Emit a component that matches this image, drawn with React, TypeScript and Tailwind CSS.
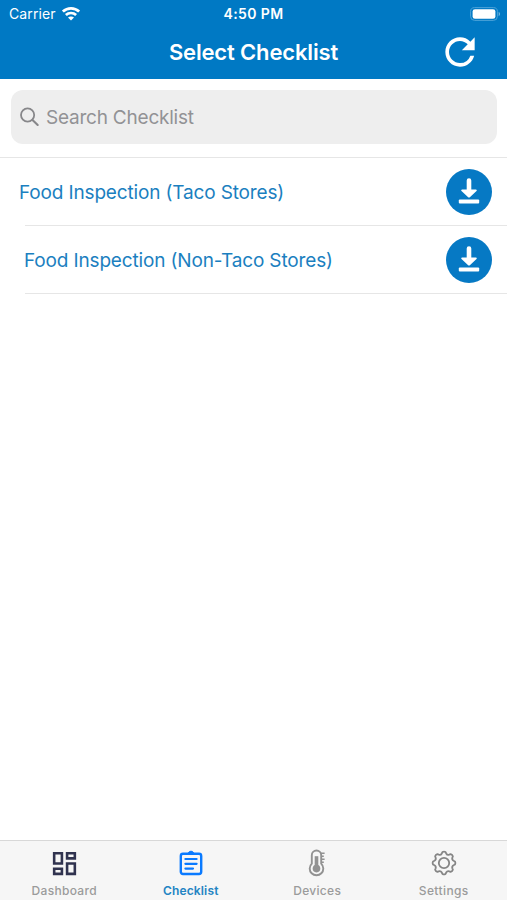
import React from 'react';
import { MdOutlineDashboard, MdRefresh } from 'react-icons/md';

interface ChecklistRowProps {
  title: string;
  textClassName: string;
}

interface TabItemProps {
  label: string;
  labelClassName: string;
  children: React.ReactNode;
}

// Outline of an eight-toothed gear centred on the origin
const gearPath = (() => {
  const point = (radius: number, degrees: number) => {
    const a = (degrees * Math.PI) / 180;
    return `${(radius * Math.sin(a)).toFixed(2)} ${(-radius * Math.cos(a)).toFixed(2)}`;
  };
  let d = `M${point(11.1, -8)}`;
  for (let i = 0; i < 8; i++) {
    const a = i * 45;
    d += `Q${point(11.8, a)} ${point(11.1, a + 8)}`;
    d += `L${point(9.8, a + 13)}Q${point(8.4, a + 22.5)} ${point(9.8, a + 32)}L${point(11.1, a + 37)}`;
  }
  return `${d}Z`;
})();

const WifiIcon = () => (
  <svg className="w-[18px] h-[14px]" viewBox="0 0 18 14" fill="none" stroke="white" strokeWidth="2.7">
    <path d="M.9 4.6C5.4.3 12.6.3 17.1 4.6" />
    <path d="M3.9 8c2.8-2.7 7.4-2.7 10.2 0" />
    <path d="M9 13.5 6 10.5c1.6-1.5 4.4-1.5 6 0z" fill="white" stroke="none" />
  </svg>
);

const BatteryIcon = () => (
  <svg className="w-[31px] h-[14px]" viewBox="0 0 31 14" fill="none">
    <rect x=".6" y=".6" width="26.8" height="12.8" rx="4" stroke="#4ca3d8" />
    <rect x="2.6" y="2.2" width="22.8" height="9.6" rx="2.4" fill="white" />
    <path d="M28.7 4.8c1.8.7 1.8 3.7 0 4.4z" fill="#79b9e0" />
  </svg>
);

const SearchIcon = () => (
  <svg className="w-5 h-5" viewBox="0 0 20 20" fill="none" stroke="#87878a" strokeWidth="1.8" strokeLinecap="round">
    <circle cx="7.6" cy="8" r="6.6" />
    <path d="m12.5 12.9 5.2 5" strokeWidth="2.1" />
  </svg>
);

const DownloadIcon = () => (
  <svg className="w-6 h-7" viewBox="0 0 24 28">
    <path d="M9.7 2.6a2.3 2.3 0 0 1 4.6 0v8.9h4.5c1 0 1.3.8.7 1.4l-6.4 6.2q-1.1 1-2.2 0l-6.4-6.2c-.6-.6-.3-1.4.7-1.4h4.5z" fill="white" />
    <rect x="1.8" y="21.6" width="20.4" height="3.8" rx="1" fill="white" />
  </svg>
);

const ClipboardIcon = () => (
  <svg className="w-6 h-[26px]" viewBox="0 0 24 26" fill="none" stroke="#0a7aff" strokeWidth="2.4">
    <rect x="1.8" y="3.8" width="20.4" height="20.2" rx="2.2" />
    <path d="M7.8 3.8c1.6 0 1.4-2.6 4.2-2.6s2.6 2.6 4.2 2.6z" fill="#0a7aff" strokeWidth="1" />
    <path d="M6.4 9h11.2M6.4 13.8h11.2M6.4 18.6h7.6" strokeLinecap="round" strokeWidth="2.2" />
  </svg>
);

const ThermometerIcon = () => (
  <svg className="w-[18px] h-7" viewBox="0 0 18 28" fill="none" stroke="#929292" strokeWidth="1.9">
    <path d="M3.8 14.6V6.2a4.7 4.7 0 0 1 9.4 0v8.4a6.8 6.8 0 1 1-9.4 0z" />
    <circle cx="8.5" cy="19.6" r="3.8" fill="#929292" stroke="none" />
    <path d="M8.5 7.2v11.4" strokeWidth="3.6" />
    <path d="M12 4.2h4.6M13 7.2h2.8M13 10.2h3.6M13 13.2h2.8" strokeWidth="1.6" />
  </svg>
);

const GearIcon = () => (
  <svg className="w-[26px] h-[26px]" viewBox="-13 -13 26 26" fill="none" stroke="#858585" strokeWidth="1.8" strokeLinejoin="round">
    <path d={gearPath} />
    <circle r="5.2" />
  </svg>
);

const ChecklistRow: React.FC<ChecklistRowProps> = ({ title, textClassName }) => (
  <li>
    <div className={`h-[67px] flex items-center justify-between pr-[15px] ${textClassName}`}>
      <span className="pt-[3px] text-[19px] tracking-[-0.15px] text-[#1b7fc0] whitespace-nowrap">{title}</span>
      <button className="w-[46px] h-[46px] rounded-full bg-[#0679c4] flex items-center justify-center">
        <DownloadIcon />
      </button>
    </div>
    <div className="ml-[25px] border-b border-[#e6e6e6]" />
  </li>
);

const TabItem: React.FC<TabItemProps> = ({ label, labelClassName, children }) => (
  <button className="flex-1 flex flex-col items-center pt-[7px]">
    <span className="h-[30px] flex items-center justify-center">{children}</span>
    <span className={`mt-[5px] text-xs leading-4 ${labelClassName}`}>{label}</span>
  </button>
);

export default function App() {
  return (
    <div className="w-[507px] h-[900px] flex flex-col bg-white font-['Inter',sans-serif] overflow-hidden">
      <header className="h-[79px] shrink-0 bg-[#0079c4] text-white">
        <div className="h-[27px] grid grid-cols-3 items-center pl-[9px] pr-[6px]">
          <div className="flex items-center gap-[6px]">
            <span className="text-[14px] tracking-[0.1px]">Carrier</span>
            <WifiIcon />
          </div>
          <span className="-ml-[3px] text-center text-[14px] font-semibold tracking-[0.4px]">4:50 PM</span>
          <div className="flex justify-end">
            <BatteryIcon />
          </div>
        </div>
        <div className="h-[50px] grid grid-cols-[1fr_auto_1fr] items-center pl-6 pr-[25px]">
          <h1 className="col-start-2 pl-px text-[22px] font-semibold tracking-[-0.15px]">Select Checklist</h1>
          <button className="justify-self-end">
            <MdRefresh className="w-11 h-11" />
          </button>
        </div>
      </header>

      <div className="h-[79px] shrink-0 pl-[11px] pr-[10px] pt-[11px] border-b border-[#e6e6e6]">
        <div className="h-[54px] rounded-xl bg-[#eeeeee] flex items-center gap-[6px] pl-[9px]">
          <SearchIcon />
          <span className="pt-[2px] text-[19px] tracking-[-0.22px] text-[#929295]">Search Checklist</span>
        </div>
      </div>

      <ul className="flex-1">
        <ChecklistRow title="Food Inspection (Taco Stores)" textClassName="pl-[19px]" />
        <ChecklistRow title="Food Inspection (Non-Taco Stores)" textClassName="pl-6" />
      </ul>

      <nav className="h-[60px] shrink-0 flex items-start pl-px bg-[#f6f6f6] border-t border-[#d8d8d8]">
        <TabItem label="Dashboard" labelClassName="font-medium tracking-[0.3px] text-[#9b9b9b]">
          <MdOutlineDashboard className="w-[31px] h-[31px] text-[#30334f]" />
        </TabItem>
        <TabItem label="Checklist" labelClassName="font-semibold tracking-[0.15px] text-[#2384c3]">
          <ClipboardIcon />
        </TabItem>
        <TabItem label="Devices" labelClassName="font-medium tracking-[0.3px] text-[#9b9b9b]">
          <ThermometerIcon />
        </TabItem>
        <TabItem label="Settings" labelClassName="font-medium tracking-[0.4px] text-[#9b9b9b]">
          <GearIcon />
        </TabItem>
      </nav>
    </div>
  );
}
